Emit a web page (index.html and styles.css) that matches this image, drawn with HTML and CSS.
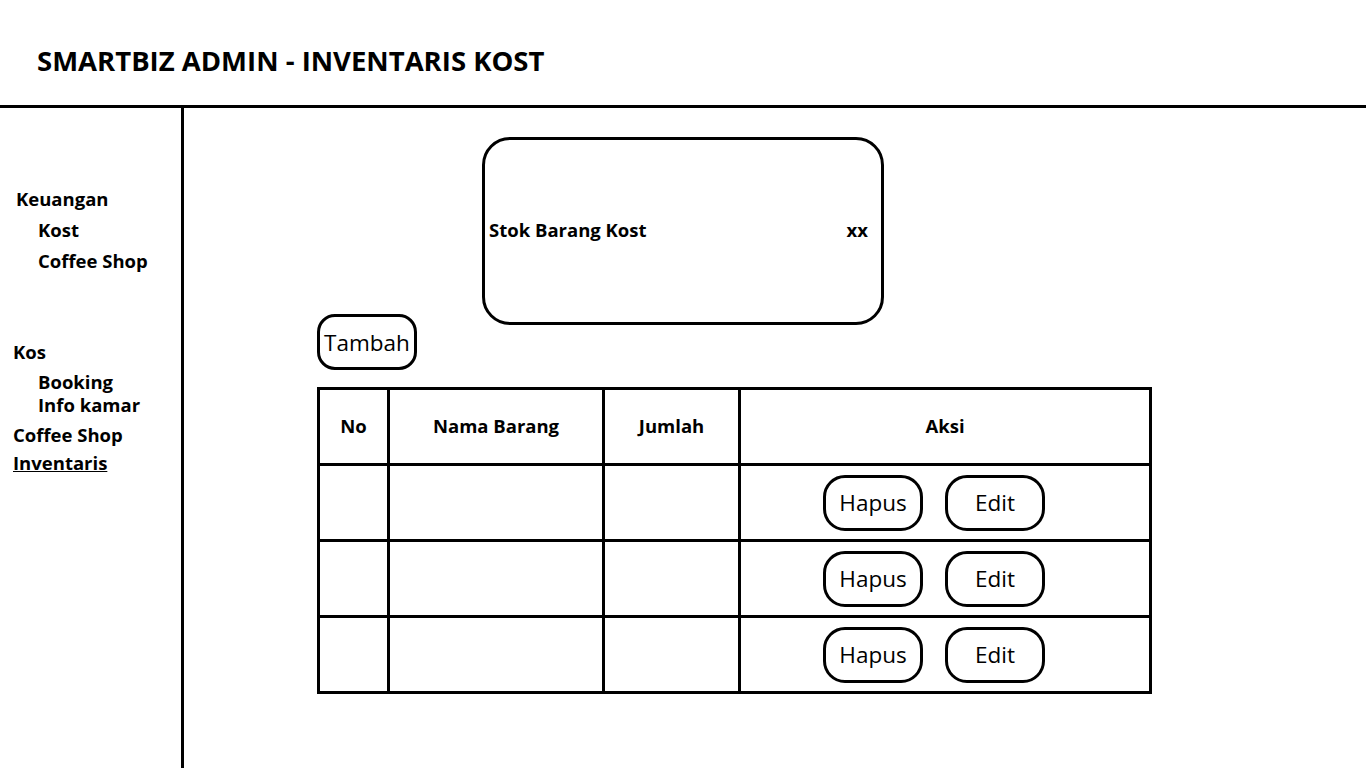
FILE: index.html
```html
<!doctype html>
<html lang="en">
<head>
    <meta charset="UTF-8">
    <meta name="viewport" content="width=device-width, initial-scale=1.0">
    <title>SmartBiz Admin - Inventaris Kost</title>
    <link rel="stylesheet" href="styles.css">
</head>
<body>
<div class="header">
    <h1 class="title">SMARTBIZ ADMIN - INVENTARIS KOST</h1>
</div>
<div class="wrap">
    <div class="sidebar">
        <a href="#" class="nav-group keuangan">Keuangan</a>
        <a href="#" class="nav-sub">Kost</a>
        <a href="#" class="nav-sub">Coffee Shop</a>
        <a href="#" class="nav-group kos">Kos</a>
        <a href="#" class="nav-sub booking">Booking</a>
        <a href="#" class="nav-sub info">Info kamar</a>
        <a href="#" class="nav-group coffee">Coffee Shop</a>
        <a href="#" class="nav-group inventaris">Inventaris</a>
    </div>
    <div class="main">
        <div class="card">
            <span>Stok Barang Kost</span>
            <span>xx</span>
        </div>
        <button class="btn tambah">Tambah</button>
        <table class="tabel">
            <thead>
            <tr>
                <th class="col-no">No</th>
                <th class="col-nama">Nama Barang</th>
                <th class="col-jumlah">Jumlah</th>
                <th class="col-aksi">Aksi</th>
            </tr>
            </thead>
            <tbody>
            <tr>
                <td></td><td></td><td></td>
                <td class="aksi"><button class="btn">Hapus</button><button class="btn">Edit</button></td>
            </tr>
            <tr>
                <td></td><td></td><td></td>
                <td class="aksi"><button class="btn">Hapus</button><button class="btn">Edit</button></td>
            </tr>
            <tr>
                <td></td><td></td><td></td>
                <td class="aksi"><button class="btn">Hapus</button><button class="btn">Edit</button></td>
            </tr>
            </tbody>
        </table>
    </div>
</div>
</body>
</html>
```

FILE: styles.css
```css
html, body {
    margin: 0;
    padding: 0;
    height: 100%;
    overflow: hidden;
    background: #fff;
    color: #000;
    font-family: "Open Sans", "Liberation Sans", sans-serif;
}

.header {
    height: 108px;
    box-sizing: border-box;
    border-bottom: 3px solid #000;
    padding: 0 0 0 37px;
}

.title {
    margin: 0;
    padding-top: 41px;
    line-height: 40px;
    font-size: 27.5px;
    font-weight: 700;
}

.wrap {
    display: flex;
    height: calc(100% - 108px);
}

.sidebar {
    width: 181px;
    border-right: 3px solid #000;
    display: flex;
    flex-direction: column;
    padding-top: 79px;
}

.sidebar a {
    color: #000;
    text-decoration: none;
    font-size: 18.5px;
    font-weight: 700;
    line-height: 23px;
}

.nav-group {
    padding-left: 13px;
}

.nav-sub {
    padding-left: 38px;
    margin-top: 8px;
}

.keuangan {
    padding-left: 16px;
}

.kos {
    margin-top: 68px;
}

.booking {
    margin-top: 7px;
}

.info {
    margin-top: 0;
}

.coffee {
    margin-top: 7px;
}

.inventaris {
    margin-top: 5px;
    text-decoration: underline !important;
}

.main {
    flex: 1;
    display: flex;
    flex-direction: column;
    align-items: flex-start;
    padding: 29px 0 0 133px;
}

.card {
    margin-left: 165px;
    width: 402px;
    height: 188px;
    box-sizing: border-box;
    border: 3px solid #000;
    border-radius: 28px;
    display: flex;
    align-items: center;
    justify-content: space-between;
    padding: 0 13px 4px 4px;
    font-size: 18.5px;
    font-weight: 700;
}

.btn {
    font-family: "Open Sans", "Liberation Sans", sans-serif;
    font-size: 22.5px;
    background: #fff;
    color: #000;
    border: 3px solid #000;
    border-radius: 22px;
    height: 56px;
    width: 100px;
    padding: 0;
}

.tambah {
    margin-top: -11px;
    width: 100px;
    border-radius: 18px;
}

.tabel {
    margin-top: 17px;
    border-collapse: collapse;
    border: 3px solid #000;
}

.tabel th, .tabel td {
    border: 3px solid #000;
    height: 73px;
    padding: 0;
    text-align: center;
    font-size: 18.5px;
}

.tabel th {
    font-weight: 700;
    height: 70px;
    padding-bottom: 3px;
}

.col-no {
    width: 67px;
}

.col-nama {
    width: 212px;
}

.col-jumlah {
    width: 133px;
}

.col-aksi {
    width: 408px;
}

.aksi {
    padding-right: 22px !important;
}

.aksi .btn {
    vertical-align: middle;
    margin: 0 11px;
}
```
